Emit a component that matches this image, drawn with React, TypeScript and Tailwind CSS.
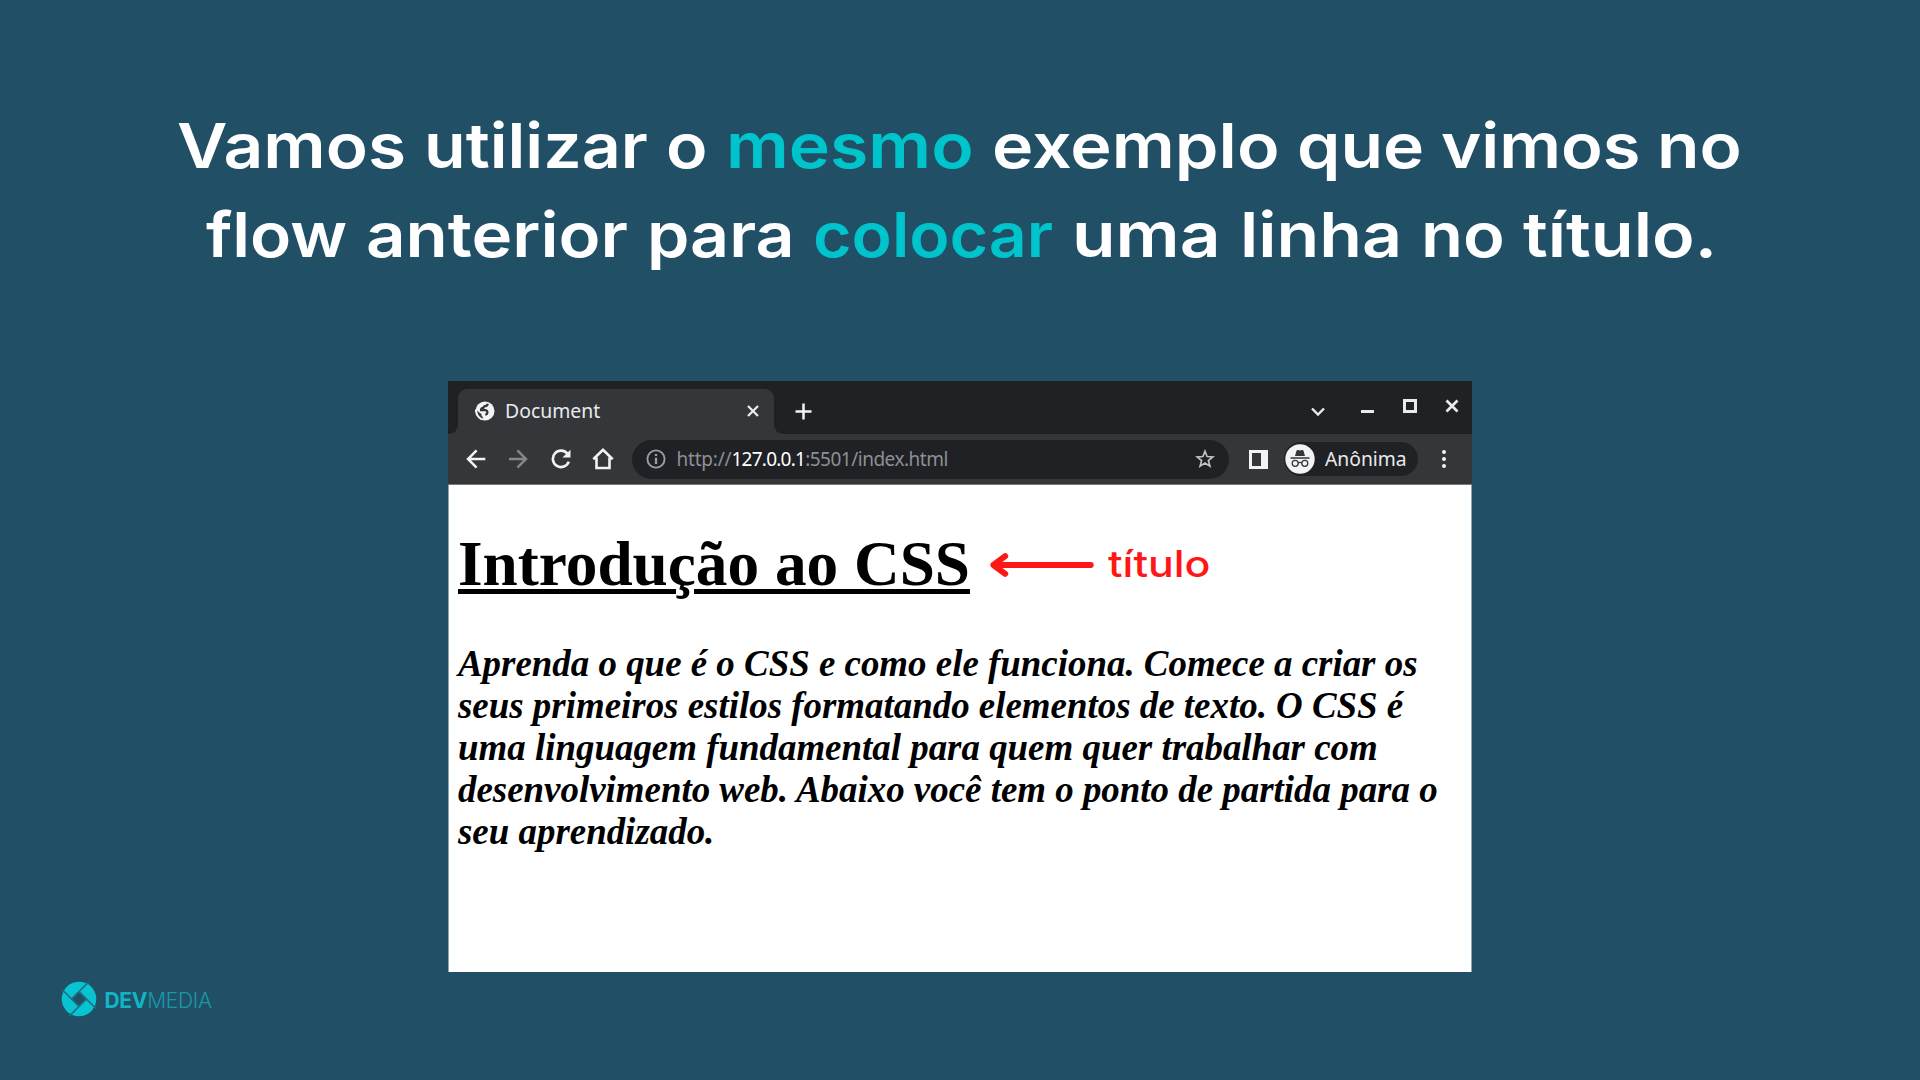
type Word = { text: string; box: string; accent?: boolean };

const lineOne: Word[] = [
  { text: "Vamos", box: "w-[246.6px] scale-x-[1.118]" },
  { text: "utilizar", box: "w-[242.9px] scale-x-[1.098]" },
  { text: "o", box: "w-[59.9px] scale-x-[1.1]" },
  { text: "mesmo", box: "w-[265.5px] scale-x-[1.125]", accent: true },
  { text: "exemplo", box: "w-[305.1px] scale-x-[1.13]" },
  { text: "que", box: "w-[144px] scale-x-[1.122]" },
  { text: "vimos", box: "w-[216px] scale-x-[1.107]" },
  { text: "no", box: "w-[80px] scale-x-[1.12]" },
];

const lineTwo: Word[] = [
  { text: "flow", box: "w-[160px] scale-x-[1.093]" },
  { text: "anterior", box: "w-[280.8px] scale-x-[1.113]" },
  { text: "para", box: "w-[166.2px] scale-x-[1.097]" },
  { text: "colocar", box: "w-[259.4px] scale-x-[1.068]", accent: true },
  { text: "uma", box: "w-[167.4px] scale-x-[1.148]" },
  { text: "linha", box: "w-[181px] scale-x-[1.126]" },
  { text: "no", box: "w-[101.8px] scale-x-[1.107]" },
  { text: "título.", box: "w-[190px] scale-x-[1.13]" },
];

function HeadingLine({ words, indent }: { words: Word[]; indent: string }) {
  return (
    <span className={`flex whitespace-pre ${indent}`}>
      {words.map((w, i) => (
        <span key={i} className={`shrink-0 origin-left ${w.box} ${w.accent ? "text-[#00c4cc]" : ""}`}>
          {w.text + " "}
        </span>
      ))}
    </span>
  );
}

function TabStrip() {
  return (
    <div className="flex h-[53px] bg-[#202124] text-[#e8eaed]">
      <div className="flex w-[10px] flex-col justify-end bg-[#202124]">
        <div className="h-[9px] bg-[#35363a]">
          <div className="h-[9px] rounded-br-[9px] bg-[#202124]" />
        </div>
      </div>
      <div className="mt-2 flex h-[45px] w-[316px] items-center rounded-t-[9px] bg-[#35363a] pb-px pl-[16.5px] pr-[14px]">
        <svg className="size-5 shrink-0" viewBox="0 0 20 20">
          <circle cx="10" cy="10" r="9.5" fill="#f1f3f4" />
          <path
            d="M12.8 2.8Q12.4 5 10.2 5.2Q8.6 5.4 8.4 6.8Q6 7 6 9.2H10.4Q12.6 9.6 12.4 11.8Q12.2 13.4 10.2 13.6"
            fill="none"
            stroke="#35363a"
            strokeWidth="2.2"
          />
          <path d="M1.8 9.4L6.6 13.2V15Q8 15.4 8 17.6L6.4 17.2Q2.4 15 1.8 9.4Z" fill="#35363a" />
          <path d="M.9 8.4Q1 15 6.4 18.2" fill="none" stroke="#f1f3f4" strokeWidth="2" />
        </svg>
        <span className="ml-[10.5px] text-[19.4px] leading-[26px]">Document</span>
        <svg className="ml-auto size-[14px]" viewBox="0 0 14 14" stroke="#e8eaed" strokeWidth="2.3">
          <path d="M2 2L12 12M12 2L2 12" />
        </svg>
      </div>
      <div className="flex w-[9px] flex-col justify-end">
        <div className="h-[9px] bg-[#35363a]">
          <div className="h-[9px] rounded-bl-[9px] bg-[#202124]" />
        </div>
      </div>
      <svg className="ml-[12px] mt-[22px] size-[17px]" viewBox="0 0 17 17" stroke="#f1f3f4" strokeWidth="2.5">
        <path d="M8.5 .5V16.5M.5 8.5H16.5" />
      </svg>
      <div className="ml-auto mr-[13px] flex items-start">
        <svg className="mt-[25.5px] h-[10px] w-[14px]" viewBox="0 0 14 10" fill="none" stroke="#e8eaed" strokeWidth="2.4">
          <path d="M1 1.5L7 7.5L13 1.5" />
        </svg>
        <div className="ml-[36.5px] mt-[29px] h-[3px] w-[13px] bg-[#e8eaed]" />
        <div className="ml-[29px] mt-[18px] size-[14px] border-[3px] border-[#e8eaed]" />
        <svg className="ml-[28px] mt-[18px] size-[14px]" viewBox="0 0 14 14" stroke="#e8eaed" strokeWidth="2.7">
          <path d="M1.5 1.5L12.5 12.5M12.5 1.5L1.5 12.5" />
        </svg>
      </div>
    </div>
  );
}

function Toolbar() {
  return (
    <div className="flex h-[51px] items-center border-b border-[#77787b] bg-[#35363a] pl-[18px]">
      <svg className="h-[20px] w-[20px] shrink-0" viewBox="0 0 20 20" fill="none" stroke="#f1f3f4" strokeWidth="2.5">
        <path d="M19.3 10H2.5M10.6 1.3L2 10L10.6 18.7" />
      </svg>
      <svg className="ml-[22px] h-[20px] w-[20px] shrink-0" viewBox="0 0 20 20" fill="none" stroke="#85868a" strokeWidth="2.5">
        <path d="M1 10H17.5M9.4 1.3L18 10L9.4 18.7" />
      </svg>
      <svg className="ml-[22.5px] size-[20px] shrink-0" viewBox="0 0 20 20" fill="none">
        <path d="M16.6 4.9A8.2 8.2 0 1 0 17.8 12.6" stroke="#f1f3f4" strokeWidth="2.6" />
        <path d="M19.5 .8V8.6H11.4Z" fill="#f1f3f4" />
      </svg>
      <svg className="ml-[21px] h-[22px] w-[22px] shrink-0" viewBox="0 0 22 22" fill="none" stroke="#f1f3f4" strokeWidth="2.6">
        <path d="M1.3 11.3L11 1.9L20.7 11.3M4.5 9.5V20H17.5V9.5" />
      </svg>
      <div className="ml-[18px] flex h-[39px] w-[597px] shrink-0 items-center rounded-full bg-[#202124] pl-[14px] pr-[13.5px]">
        <svg className="size-[20px]" viewBox="0 0 20 20" fill="none" stroke="#9aa0a6" strokeWidth="1.9">
          <circle cx="10" cy="10" r="8.6" />
          <path d="M10 8.8V15M10 5V7" strokeWidth="2.3" />
        </svg>
        <div className="ml-[11px] whitespace-nowrap text-[19px] leading-[26px] text-[#8b9095]">
          <span className="tracking-[-0.2px]">http://</span>
          <span className="tracking-[-0.76px] text-white">127.0.0.1</span>
          <span className="tracking-[-0.5px]">:5501/index.html</span>
        </div>
        <svg className="ml-auto size-[20px]" viewBox="0 0 20 20" fill="none" stroke="#c0c2c5" strokeWidth="1.7">
          <path d="M10 2.2L12.1 7.5L17.8 7.9L13.4 11.6L14.9 17.2L10 14.1L5.1 17.2L6.6 11.6L2.2 7.9L7.9 7.5Z" />
        </svg>
      </div>
      <div className="ml-[20px] h-[19px] w-[19px] shrink-0 border-[3px] border-r-[7px] border-[#f1f3f4] bg-[#35363a]" />
      <div className="ml-[16px] flex h-[34px] w-[134.5px] shrink-0 items-center rounded-full bg-[#202124] pl-[1.5px]">
        <svg className="size-[30px] shrink-0" viewBox="0 0 30 30">
          <circle cx="15" cy="15" r="14.7" fill="#f1f3f4" />
          <path d="M10 12L11.6 6.6Q12 5.6 13 6L15 6.5L17 6Q18 5.6 18.4 6.6L20 12Z" fill="#35363a" />
          <path d="M5.5 14H24.5" stroke="#35363a" strokeWidth="1.5" />
          <g fill="none" stroke="#35363a" strokeWidth="1.3">
            <circle cx="10.2" cy="19.3" r="3" />
            <circle cx="19.8" cy="19.3" r="3" />
            <path d="M13.2 19Q15 17.8 16.8 19" />
          </g>
        </svg>
        <span className="ml-[10px] text-[19.3px] leading-[26px] text-[#e8eaed]">Anônima</span>
      </div>
      <div className="ml-[24px] flex flex-col gap-[3px]">
        <div className="size-1 rounded-full bg-[#f1f3f4]" />
        <div className="size-1 rounded-full bg-[#f1f3f4]" />
        <div className="size-1 rounded-full bg-[#f1f3f4]" />
      </div>
    </div>
  );
}

export default function App() {
  return (
    <div className="flex h-[1080px] w-[1920px] flex-col overflow-hidden bg-[#215066]">
      <h1 className="h-[381px] shrink-0 pt-[102px] font-['Inter',sans-serif] text-[62px] font-semibold leading-[88.7px] text-white">
        <HeadingLine words={lineOne} indent="pl-[177px]" />
        <HeadingLine words={lineTwo} indent="pl-[206px]" />
      </h1>

      <section className="ml-[448px] flex h-[591px] w-[1024px] shrink-0 flex-col font-['Noto_Sans',sans-serif]">
        <TabStrip />
        <Toolbar />
        <div className="flex-1 border-x border-[#90a7b2] bg-white pl-[9px] pt-[43px] font-['Liberation_Serif',serif] text-black">
          <div className="flex h-[72px] items-center">
            <h2 className="w-[512px] whitespace-nowrap text-[63.25px] font-bold leading-[72px] underline decoration-[5.3px] underline-offset-[4px]">
              Introdução ao CSS
            </h2>
            <svg className="ml-[18.5px] mt-[2px] h-[28px] w-[106px] shrink-0" viewBox="0 0 106 28" fill="none" stroke="#ff1616" strokeWidth="6" strokeLinecap="round" strokeLinejoin="round">
              <path d="M101.7 14H5M16.2 5.2L4.4 14L16.2 22.8" />
            </svg>
            <span className="ml-[13px] origin-left scale-x-[1.175] font-['Inter',sans-serif] text-[36.5px] font-medium leading-[44px] text-[#ff1616]">
              título
            </span>
          </div>
          <p className="mt-[42.5px] whitespace-nowrap text-[36.91px] font-bold italic leading-[42.2px]">
            Aprenda o que é o CSS e como ele funciona. Comece a criar os
            <br />
            seus primeiros estilos formatando elementos de texto. O CSS é
            <br />
            uma linguagem fundamental para quem quer trabalhar com
            <br />
            desenvolvimento web. Abaixo você tem o ponto de partida para o
            <br />
            seu aprendizado.
          </p>
        </div>
      </section>

      <footer className="ml-[61px] mt-[9px] flex h-[36px] items-center">
        <svg className="size-[36px]" viewBox="-18 -18 36 36">
          <circle r="17.3" fill="#08c3d2" />
          <path d="M0 -7.8L7.8 0L0 7.8L-7.8 0Z" fill="#215066" />
          <path d="M-7.4 0L9.5 -16.9M0 -7.4L16.9 9.5M7.4 0L-9.5 16.9M0 7.4L-16.9 -9.5" stroke="#1b6f83" strokeWidth="1.6" />
        </svg>
        <span className="ml-[7.5px] mt-[3px] font-['Inter',sans-serif] text-[21px] leading-[26px] tracking-[-0.3px]">
          <span className="font-bold text-[#10b6c6]">DEV</span>
          <span className="font-light text-[#1798a9]">MEDIA</span>
        </span>
      </footer>
    </div>
  );
}
